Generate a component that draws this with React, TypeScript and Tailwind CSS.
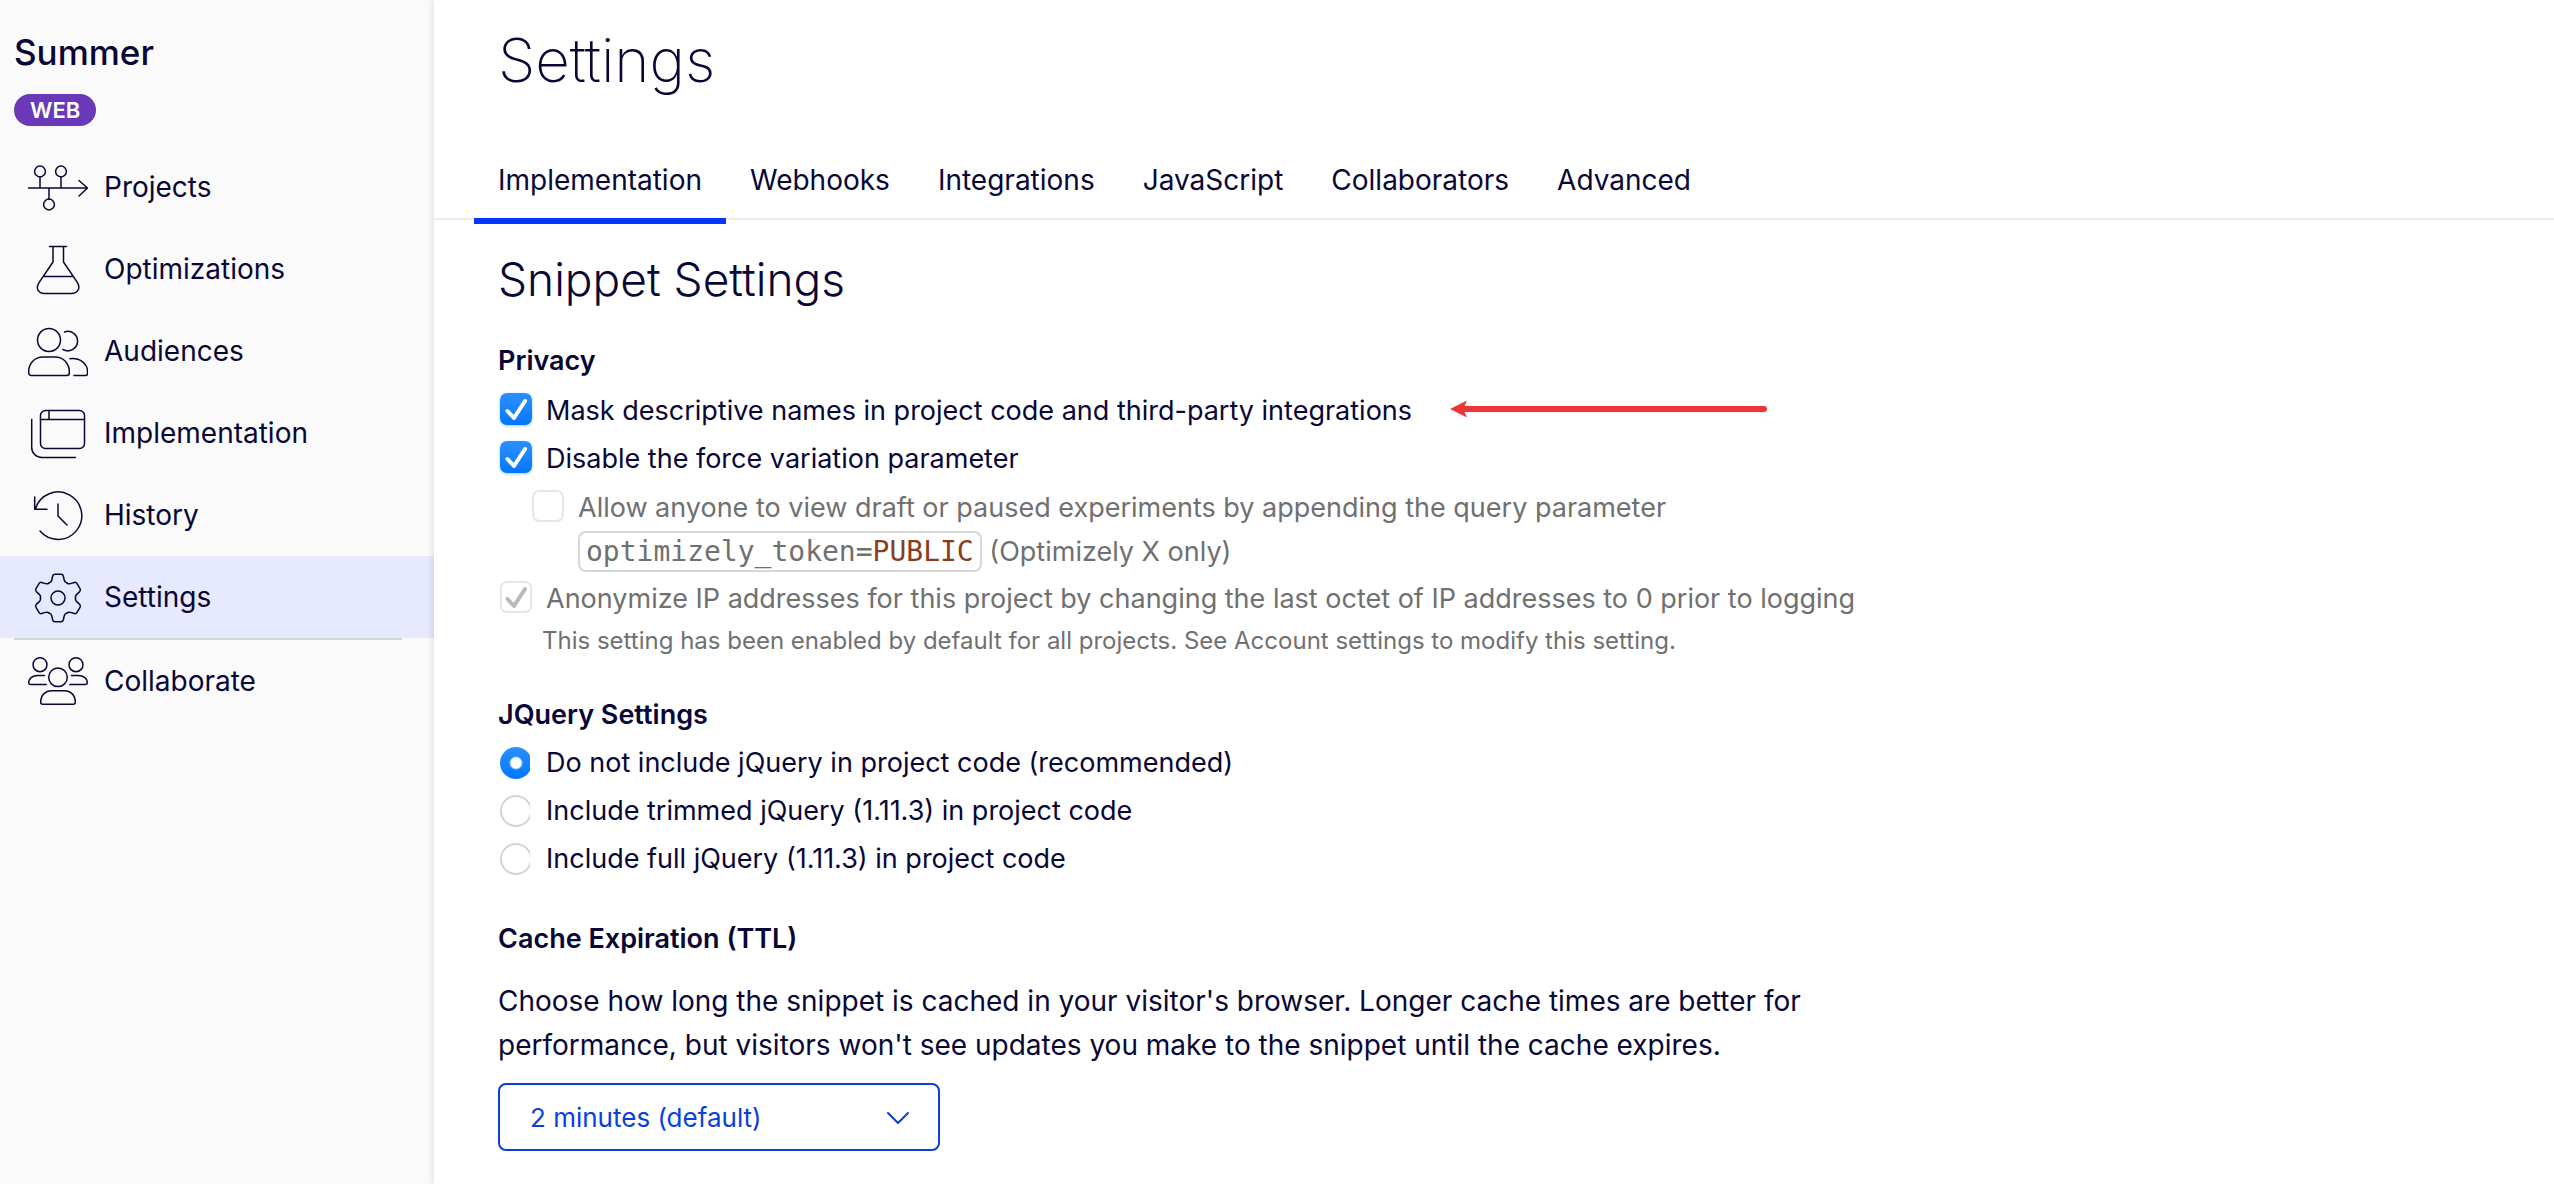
import { useState } from 'react';
import type { ReactNode } from 'react';

type NavIconProps = {
  children: ReactNode;
};

function NavIcon({ children }: NavIconProps) {
  return (
    <svg
      width="60"
      height="60"
      viewBox="0 0 60 60"
      fill="none"
      stroke="currentColor"
      strokeWidth="1.5"
      strokeLinecap="round"
      strokeLinejoin="round"
      aria-hidden="true"
      className="shrink-0"
    >
      {children}
    </svg>
  );
}

const projectsIcon = (
  <NavIcon>
    <path d="M.5 31H59M51 23.5l8.5 7.5-8.5 8M12 20v11M33 20v11M21 31v11.5" />
    <circle cx="12" cy="14.5" r="5.4" />
    <circle cx="33" cy="14.5" r="5.4" />
    <circle cx="21" cy="47.5" r="5.4" />
  </NavIcon>
);

const flaskIcon = (
  <NavIcon>
    <path d="M21.5 7.5h17M25 7.5V23L11.2 43.3C7 49.5 10.5 54.5 16.5 54.5h27c6 0 9.5-5 5.8-11.2L35.5 23V7.5M15.5 37.5h30" />
  </NavIcon>
);

const audiencesIcon = (
  <NavIcon>
    <circle cx="21" cy="19" r="11.5" />
    <path d="M.7 50.5C.7 43 6 36 15 36h12c9 0 14.3 7 14.3 14.5v1.5q0 2.5-2.5 2.5H3.2Q.7 54.5.7 52z" />
    <path d="M36.5 11a9.7 9.7 0 1 1-1.5 17.5M42 37.7c10.5-1 17.5 5.3 17.5 12.8v2q0 2-2 2H46" />
  </NavIcon>
);

const windowIcon = (
  <NavIcon>
    <rect x="12.5" y="7.5" width="44" height="38" rx="5" />
    <path d="M12.5 16.5h44M21 7.5v9M3.7 16.5V44.5a10 10 0 0 0 10 10H47.5" />
  </NavIcon>
);

const historyIcon = (
  <NavIcon>
    <path d="M7.5 23.5A23.7 23.7 0 1 1 12 46M6.7 12v12.3H19M30 19v12l9 9" />
  </NavIcon>
);

const gearIcon = (
  <NavIcon>
    <circle cx="30" cy="31" r="7" />
    {[0, 60, 120, 180, 240, 300].map((angle) => (
      <path
        key={angle}
        transform={`translate(30 31) rotate(${angle})`}
        d="M-8.8-15.2L-8.3-15.4Q-6.7-15.9-6.2-18L-5.3-22Q-4.8-23.7-3-23.7H3Q4.8-23.7 5.3-22L6.2-18Q6.7-15.9 8.3-15.4L8.8-15.2"
      />
    ))}
  </NavIcon>
);

const collaborateIcon = (
  <NavIcon>
    <circle cx="12" cy="13.7" r="7" />
    <circle cx="48" cy="13.7" r="7" />
    <circle cx="30" cy="26.3" r="9.3" />
    <path d="M16.5 24.5H10C4 24.5.7 28 .7 31.5q0 2 2 2h15.5M43.5 24.5H50c6 0 9.3 3.5 9.3 7q0 2-2 2H41.8" />
    <path d="M12.7 51.3c0-7 4.5-11.6 11-11.6h12.6c6.5 0 11 4.6 11 11.6q0 2-2 2H14.7q-2 0-2-2z" />
  </NavIcon>
);

const navItems = [
  { label: 'Projects', icon: projectsIcon },
  { label: 'Optimizations', icon: flaskIcon },
  { label: 'Audiences', icon: audiencesIcon },
  { label: 'Implementation', icon: windowIcon },
  { label: 'History', icon: historyIcon },
  { label: 'Settings', icon: gearIcon },
];

const tabs = ['Implementation', 'Webhooks', 'Integrations', 'JavaScript', 'Collaborators', 'Advanced'];

const jqueryOptions = [
  { value: 'none', label: 'Do not include jQuery in project code (recommended)' },
  { value: 'trimmed', label: 'Include trimmed jQuery (1.11.3) in project code' },
  { value: 'full', label: 'Include full jQuery (1.11.3) in project code' },
];

type NavLinkProps = {
  label: string;
  icon: ReactNode;
  active?: boolean;
};

function NavLink({ label, icon, active = false }: NavLinkProps) {
  return (
    <a
      href="#"
      aria-current={active ? 'page' : undefined}
      className={`flex h-[82px] items-center gap-4 pl-7 ${active ? 'bg-[#e7e9ff]' : ''}`}
    >
      {icon}
      <span>{label}</span>
    </a>
  );
}

function Sidebar() {
  return (
    <aside className="w-[434px] shrink-0 bg-[#fafafa]">
      <div className="flex flex-col items-start px-3.5 pt-[30px]">
        <h2 className="text-[35px] leading-[44px] font-medium">Summer</h2>
        <span className="mt-5 rounded-full bg-[#6a39b7] px-4 text-[22px] leading-8 font-semibold text-white">
          WEB
        </span>
      </div>
      <nav className="mt-5">
        {navItems.map((item) => (
          <NavLink key={item.label} label={item.label} icon={item.icon} active={item.label === 'Settings'} />
        ))}
        <hr className="mr-8 ml-3.5 border-t-2 border-[#d3d6d9]" />
        <NavLink label="Collaborate" icon={collaborateIcon} />
      </nav>
    </aside>
  );
}

type CheckboxProps = {
  id: string;
  defaultChecked?: boolean;
  disabled?: boolean;
};

function Checkbox({ id, defaultChecked = false, disabled = false }: CheckboxProps) {
  return (
    <span className="grid size-8 shrink-0">
      <input
        id={id}
        type="checkbox"
        defaultChecked={defaultChecked}
        disabled={disabled}
        className="peer col-start-1 row-start-1 size-8 appearance-none rounded-[7px] border-2 border-[#e6e6e6] bg-white enabled:checked:border-0 enabled:checked:bg-linear-to-b enabled:checked:from-[#2b90ff] enabled:checked:to-[#0077ff] enabled:checked:shadow-[0_1px_3px_rgba(0,122,255,0.4)]"
      />
      <svg
        viewBox="0 0 32 32"
        fill="none"
        stroke="currentColor"
        strokeWidth="4"
        strokeLinecap="round"
        strokeLinejoin="round"
        aria-hidden="true"
        className="pointer-events-none col-start-1 row-start-1 hidden size-8 text-white peer-checked:block peer-disabled:text-[#b8b8b8]"
      >
        <path d="M7.5 18l6.5 7L25 8" />
      </svg>
    </span>
  );
}

export default function App() {
  const [activeTab, setActiveTab] = useState('Implementation');
  const [jquery, setJquery] = useState('none');

  return (
    <div className="flex min-h-screen bg-white font-['Inter',sans-serif] text-[28px] text-[#080736]">
      <Sidebar />
      <main className="relative min-w-0 flex-1 bg-white shadow-[0_0_8px_rgba(0,0,0,0.15)]">
        <h1 className="px-16 pt-[22px] text-[60px] leading-[76px] font-extralight">Settings</h1>
        <div role="tablist" className="mt-[52px] flex h-[70px] border-b-2 border-[#ececec] px-10">
          {tabs.map((tab) => (
            <button
              key={tab}
              type="button"
              role="tab"
              aria-selected={activeTab === tab}
              onClick={() => setActiveTab(tab)}
              className={`-mb-1.5 h-[74px] border-b-[6px] px-6 pb-2 leading-10 ${
                activeTab === tab ? 'border-[#0037ff]' : 'border-transparent'
              }`}
            >
              {tab}
            </button>
          ))}
        </div>

        <div className="px-16 pt-[31px]">
          <h2 className="text-[46px] leading-[56px] font-light">Snippet Settings</h2>

          <section className="mt-[34px] text-[27px]">
            <h3 className="mb-1.5 leading-10 font-semibold">Privacy</h3>
            <div className="flex items-start pl-0.5">
              <span className="pt-1.5">
                <Checkbox id="mask-names" defaultChecked />
              </span>
              <label htmlFor="mask-names" className="ml-3.5 leading-[48px]">
                Mask descriptive names in project code and third-party integrations
              </label>
              <svg width="318" height="20" viewBox="0 0 318 20" aria-hidden="true" className="mt-3 ml-[38px] shrink-0">
                <path d="M12 10H314" stroke="#ee3437" strokeWidth="6" strokeLinecap="round" />
                <path d="M0 10L17 1.5L13 10L17 18.5Z" fill="#ee3437" />
              </svg>
            </div>
            <div className="flex items-start pl-0.5">
              <span className="pt-1.5">
                <Checkbox id="disable-force" defaultChecked />
              </span>
              <label htmlFor="disable-force" className="ml-3.5 leading-[48px]">
                Disable the force variation parameter
              </label>
            </div>
            <div className="flex items-start pt-[3px] pb-px pl-[34px] text-[#707070]">
              <span className="pt-1">
                <Checkbox id="allow-draft" disabled />
              </span>
              <label htmlFor="allow-draft" className="ml-3.5 leading-[44px]">
                Allow anyone to view draft or paused experiments by appending the query parameter
                <br />
                <code className="rounded-lg border-2 border-[#d6d6d6] px-1.5 py-0.5 font-['DejaVu_Sans_Mono',monospace] text-[28px]">
                  optimizely_token=<span className="text-[#8a3d1c]">PUBLIC</span>
                </code>{' '}
                (Optimizely X only)
              </label>
            </div>
            <div className="flex items-start pl-0.5 text-[#707070]">
              <span className="pt-1.5">
                <Checkbox id="anonymize-ip" defaultChecked disabled />
              </span>
              <label htmlFor="anonymize-ip" className="ml-3.5 leading-[48px]">
                Anonymize IP addresses for this project by changing the last octet of IP addresses to 0 prior to logging
              </label>
            </div>
            <p className="pl-11 text-2xl leading-9 text-[#707070]">
              This setting has been enabled by default for all projects. See Account settings to modify this setting.
            </p>
          </section>

          <section className="mt-9 text-[27px]">
            <h3 className="mb-1 leading-10 font-semibold">JQuery Settings</h3>
            {jqueryOptions.map((option) => (
              <div key={option.value} className="flex items-start pl-0.5">
                <span className="mt-2 h-9 w-[30px] shrink-0 overflow-hidden">
                  <input
                    id={`jquery-${option.value}`}
                    type="radio"
                    name="jquery"
                    checked={jquery === option.value}
                    onChange={() => setJquery(option.value)}
                    className="block size-8 appearance-none rounded-full border-2 border-[#d4d4d4] bg-white checked:border-0 checked:bg-[radial-gradient(circle,#fff_5px,transparent_7px),linear-gradient(#2b90ff,#0077ff)]"
                  />
                </span>
                <label htmlFor={`jquery-${option.value}`} className="ml-4 leading-[48px]">
                  {option.label}
                </label>
              </div>
            ))}
          </section>

          <section className="mt-9">
            <h3 className="text-[27px] leading-10 font-semibold">
              <label htmlFor="cache-ttl">Cache Expiration (TTL)</label>
            </h3>
            <p className="mt-5 max-w-[1380px] leading-[44px]">
              Choose how long the snippet is cached in your visitor's browser. Longer cache times are better for
              performance, but visitors won't see updates you make to the snippet until the cache expires.
            </p>
            <div className="relative mt-4 w-[442px]">
              <select
                id="cache-ttl"
                defaultValue="2"
                className="h-[68px] w-full appearance-none rounded-lg border-2 border-[#0a40dc] bg-white px-[30px] text-[26px] text-[#0a40dc]"
              >
                <option value="2">2 minutes (default)</option>
                <option value="5">5 minutes</option>
                <option value="10">10 minutes</option>
              </select>
              <svg
                width="24"
                height="14"
                viewBox="0 0 24 14"
                fill="none"
                stroke="#0a40dc"
                strokeWidth="2"
                strokeLinecap="round"
                strokeLinejoin="round"
                aria-hidden="true"
                className="pointer-events-none absolute top-7 right-[30px]"
              >
                <path d="M2 2l10 10L22 2" />
              </svg>
            </div>
          </section>
        </div>
      </main>
    </div>
  );
}
